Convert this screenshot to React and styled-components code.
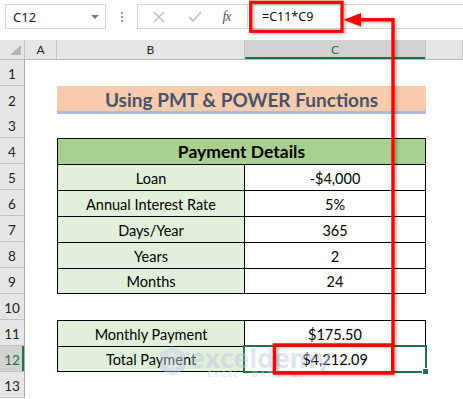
import React from 'react';
import styled, { createGlobalStyle, css } from 'styled-components';

const GlobalStyle = createGlobalStyle`
  html, body { margin: 0; padding: 0; background: #fff; }
  body { font-family: Lato, "Open Sans", sans-serif; }
  #root { width: 463px; height: 399px; }
`;

const GREEN = '#217346';
const COLS = '25px 32px 188px 181px 1fr';

const Page = styled.div`
  position: relative;
  width: 463px;
  height: 399px;
  overflow: hidden;
  background: #fff;
`;

/* ---------- formula bar ---------- */
const TopBar = styled.div`
  height: 40px;
  box-sizing: border-box;
  padding-top: 4px;
  display: flex;
  align-items: flex-start;
  background: #fff;
`;

const NameBox = styled.div`
  margin-left: 5px;
  width: 101px;
  height: 25px;
  box-sizing: border-box;
  border: 1px solid #d6d6d6;
  display: flex;
  align-items: center;
  justify-content: space-between;
  padding: 0 6px 0 7px;
  font-family: "Noto Sans", sans-serif;
  font-size: 13px;
  color: #222;
`;

const Caret = styled.span`
  width: 0;
  height: 0;
  border-left: 4px solid transparent;
  border-right: 4px solid transparent;
  border-top: 4px solid #7a7a7a;
  margin-top: 1px;
`;

const Grip = styled.div`
  width: 31px;
  height: 25px;
  display: flex;
  flex-direction: column;
  align-items: center;
  justify-content: center;
  gap: 2px;
`;

const GripDot = styled.span`
  width: 2px;
  height: 2px;
  background: #9a9a9a;
`;

const IconBox = styled.div`
  width: 110px;
  height: 25px;
  box-sizing: border-box;
  border: 1px solid #d6d6d6;
  border-right: none;
  display: grid;
  grid-template-columns: 37px 35px 1fr;
  align-items: center;
  justify-items: center;
  padding-left: 2px;
`;

const FxGlyph = styled.span`
  font-family: "Liberation Serif", serif;
  font-style: italic;
  font-size: 14px;
  color: #555;
  letter-spacing: -1px;
  padding-right: 6px;
`;

const FormulaBox = styled.div`
  flex: 1;
  height: 25px;
  box-sizing: border-box;
  border: 1px solid #d6d6d6;
  border-right: none;
  display: flex;
  align-items: center;
  padding-left: 14px;
  font-family: "Noto Sans", sans-serif;
  font-size: 12.5px;
  color: #111;
`;

/* ---------- sheet ---------- */
const Sheet = styled.div`
  display: flex;
  flex-direction: column;
`;

const HeaderRow = styled.div`
  display: grid;
  grid-template-columns: ${COLS};
  height: 19px;
  background: #e6e6e6;
  border-bottom: 1px solid #b8b8b8;
  box-sizing: content-box;
`;

const Corner = styled.div`
  position: relative;
  border-right: 1px solid #c4c4c4;
`;

const CornerTri = styled.span`
  position: absolute;
  left: 10px;
  top: 5px;
  width: 0;
  height: 0;
  border-left: 11px solid transparent;
  border-bottom: 10px solid #b4b4b4;
`;

const ColHead = styled.div`
  display: flex;
  align-items: center;
  justify-content: center;
  font-size: 12px;
  color: #222;
  border-right: 1px solid #c4c4c4;
  ${(p) =>
    p.$active &&
    css`
      background: #d2d2d2;
      color: ${GREEN};
      box-shadow: inset 0 -2px 0 ${GREEN};
    `}
`;

const Row = styled.div`
  display: grid;
  grid-template-columns: ${COLS};
  height: 26px;
`;

const RowHead = styled.div`
  background: ${(p) => (p.$active ? '#d2d2d2' : '#e6e6e6')};
  color: ${(p) => (p.$active ? GREEN : '#222')};
  border-right: 1px solid #a8a8a8;
  border-bottom: 1px solid #c2c2c2;
  box-sizing: border-box;
  display: flex;
  align-items: center;
  justify-content: center;
  font-size: 13.5px;
  padding-top: 2px;
  ${(p) =>
    p.$active &&
    css`
      box-shadow: inset -2px 0 0 ${GREEN};
    `}
`;

const TitleCell = styled.div`
  grid-column: 3 / span 2;
  align-self: start;
  height: 28px;
  box-sizing: border-box;
  background: #f8cbad;
  border-bottom: 3px solid #a9badf;
  display: flex;
  align-items: center;
  justify-content: center;
  font-weight: 700;
  font-size: 19px;
  color: #44546a;
  padding-top: 1px;
`;

const TableHead = styled.div`
  grid-column: 3 / span 2;
  background: #a9d08e;
  border: 1px solid #000;
  border-bottom: none;
  display: flex;
  align-items: center;
  justify-content: center;
  font-weight: 700;
  font-size: 17.5px;
  color: #000;
`;

const Cell = styled.div`
  position: relative;
  background: ${(p) => (p.$label ? '#e2efda' : '#fff')};
  border-top: 1px solid #000;
  border-right: 1px solid #000;
  border-left: ${(p) => (p.$label ? '1px solid #000' : 'none')};
  border-bottom: ${(p) => (p.$last ? '1px solid #000' : 'none')};
  display: flex;
  align-items: center;
  justify-content: center;
  font-size: 14.5px;
  color: #000;
  padding-top: 1px;
`;

const Selection = styled.span`
  position: absolute;
  left: -2px;
  top: -2px;
  right: -2px;
  bottom: -2px;
  border: 2px solid ${GREEN};
  pointer-events: none;
`;

const FillHandle = styled.span`
  position: absolute;
  right: -4px;
  bottom: -4px;
  width: 5px;
  height: 5px;
  background: ${GREEN};
  border: 1px solid #fff;
`;

/* ---------- overlays ---------- */
const Annotation = styled.svg`
  position: absolute;
  left: 0;
  top: 0;
  width: 463px;
  height: 399px;
  pointer-events: none;
  filter: drop-shadow(2px 1px 1.5px rgba(0, 0, 0, 0.3));
`;

const Watermark = styled.div`
  position: absolute;
  left: 159px;
  top: 344px;
  display: flex;
  align-items: center;
  gap: 3px;
  opacity: 0.45;
  pointer-events: none;
`;

const WmText = styled.div`
  display: flex;
  flex-direction: column;
  align-items: flex-start;
  line-height: 1;
`;

const WmBrand = styled.span`
  font-family: "Open Sans", sans-serif;
  font-weight: 700;
  font-size: 27px;
  color: #b7c6e2;
  letter-spacing: -0.3px;
`;

const WmTag = styled.span`
  font-family: "Open Sans", sans-serif;
  font-size: 8.5px;
  font-weight: 700;
  color: #c3cee0;
  letter-spacing: 1.6px;
  margin-left: 18px;
  margin-top: -1px;
`;

const rows = [
  { n: 1 },
  { n: 2, title: 'Using PMT & POWER Functions' },
  { n: 3 },
  { n: 4, head: 'Payment Details' },
  { n: 5, b: 'Loan', c: '-$4,000' },
  { n: 6, b: 'Annual Interest Rate', c: '5%' },
  { n: 7, b: 'Days/Year', c: '365' },
  { n: 8, b: 'Years', c: '2' },
  { n: 9, b: 'Months', c: '24', last: true },
  { n: 10 },
  { n: 11, b: 'Monthly Payment', c: '$175.50' },
  { n: 12, b: 'Total Payment', c: '$4,212.09', last: true, active: true },
  { n: 13 },
];

function XIcon() {
  return (
    <svg width="12" height="12" viewBox="0 0 12 12">
      <path d="M1 1 L11 11 M11 1 L1 11" stroke="#c2c2c2" strokeWidth="1.6" fill="none" />
    </svg>
  );
}

function CheckIcon() {
  return (
    <svg width="14" height="11" viewBox="0 0 14 11">
      <path d="M1 6 L5 10 L13 1" stroke="#c2c2c2" strokeWidth="1.8" fill="none" />
    </svg>
  );
}

function Logo() {
  return (
    <svg width="27" height="32" viewBox="0 0 27 32">
      <path d="M13.5 1 L26 8 L26 24 L13.5 31 L1 24 L1 8 Z" fill="#bccbe6" />
      <path d="M13.5 7 L20 11 L20 21 L13.5 25 L7 21 L7 11 Z" fill="#dbe4f3" />
      <path d="M13.5 16 L20 11 M13.5 16 L7 11 M13.5 16 L13.5 25" stroke="#bccbe6" strokeWidth="1.5" />
    </svg>
  );
}

export default function App() {
  return (
    <Page>
      <GlobalStyle />
      <TopBar>
        <NameBox>
          <span>C12</span>
          <Caret />
        </NameBox>
        <Grip>
          <GripDot />
          <GripDot />
          <GripDot />
        </Grip>
        <IconBox>
          <XIcon />
          <CheckIcon />
          <FxGlyph>fx</FxGlyph>
        </IconBox>
        <FormulaBox>=C11*C9</FormulaBox>
      </TopBar>

      <Sheet>
        <HeaderRow>
          <Corner>
            <CornerTri />
          </Corner>
          <ColHead>A</ColHead>
          <ColHead>B</ColHead>
          <ColHead $active>C</ColHead>
          <ColHead />
        </HeaderRow>

        {rows.map((r) => (
          <Row key={r.n}>
            <RowHead $active={r.active}>{r.n}</RowHead>
            <div />
            {r.title && <TitleCell>{r.title}</TitleCell>}
            {r.head && <TableHead>{r.head}</TableHead>}
            {r.b && (
              <>
                <Cell $label $last={r.last}>{r.b}</Cell>
                <Cell $last={r.last}>
                  {r.c}
                  {r.active && (
                    <Selection>
                      <FillHandle />
                    </Selection>
                  )}
                </Cell>
              </>
            )}
          </Row>
        ))}
      </Sheet>

      <Watermark aria-hidden="true">
        <Logo />
        <WmText>
          <WmBrand>exceldemy</WmBrand>
          <WmTag>EXCEL · DATA · BI</WmTag>
        </WmText>
      </Watermark>

      <Annotation viewBox="0 0 463 399">
        <rect x="250.7" y="2.3" width="91.3" height="29" fill="none" stroke="#ff0000" strokeWidth="3.2" />
        <rect x="274.4" y="345" width="118.3" height="28" fill="none" stroke="#ff0000" strokeWidth="3.4" />
        <path d="M393 345 L393 19.8 L358 19.8" fill="none" stroke="#ff0000" strokeWidth="3.4" />
        <path d="M343.5 19.8 L361 13 L361 26.6 Z" fill="#ff0000" />
      </Annotation>
    </Page>
  );
}
